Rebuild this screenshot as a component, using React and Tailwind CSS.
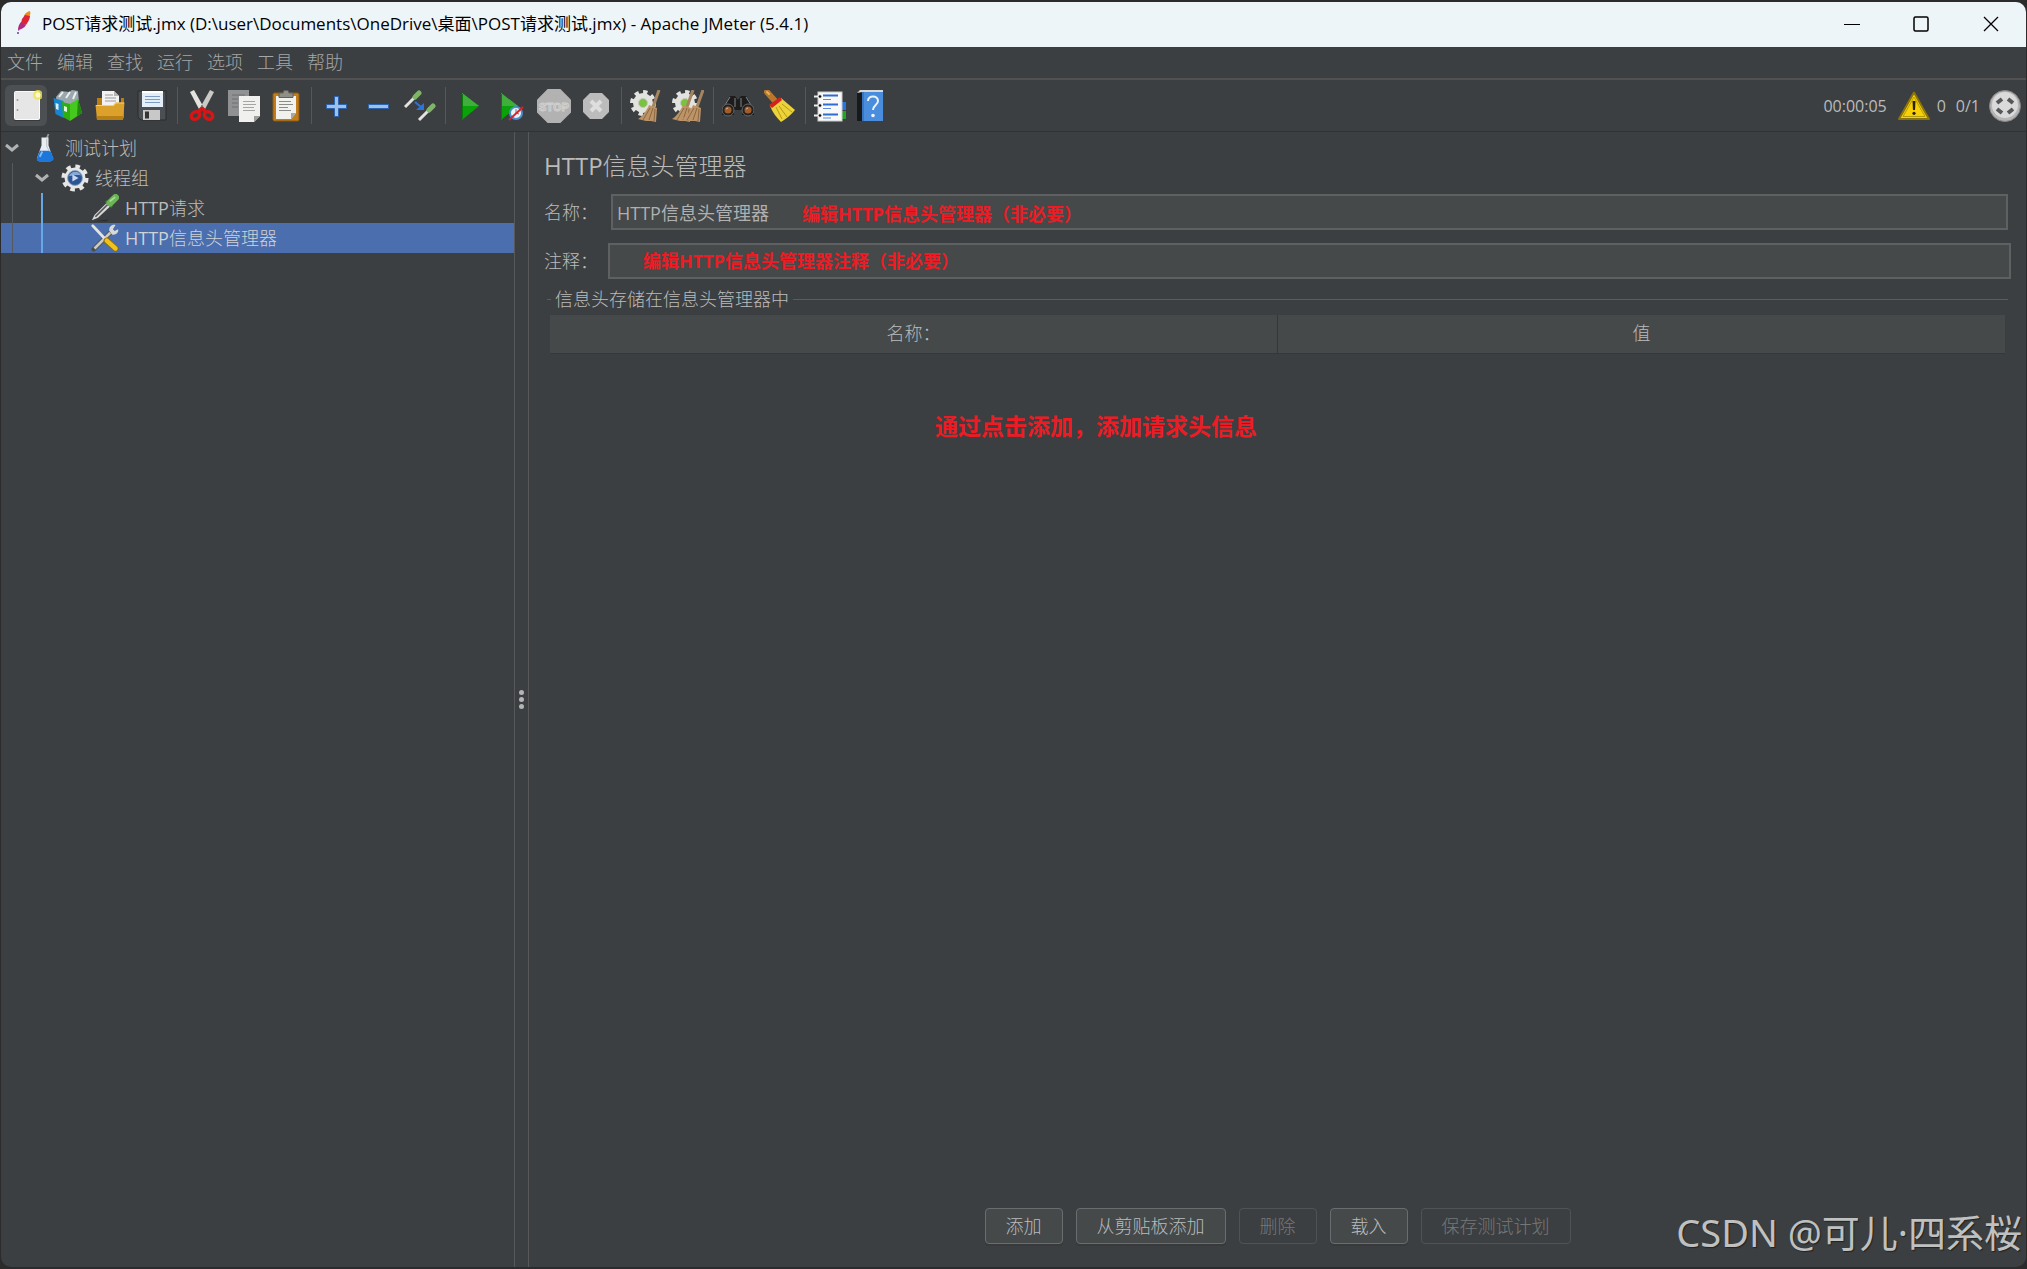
import React, { useState } from 'react'
import { clsx } from 'clsx'

/* ---------------- TOOLBAR ICONS ---------------- */
const Svg = ({ children, className = 'w-8 h-8' }) => (
  <svg viewBox="0 0 32 32" className={clsx('shrink-0', className)} fill="none" aria-hidden="true">
    {children}
  </svg>
)

const NewIcon = () => (
  <Svg>
    <rect x="4.500" y="1.500" width="25" height="28" rx="1" fill="#e6e6e6" stroke="#fafafa" />
    <path d="M4 30.500h26" stroke="#222" strokeOpacity=".5" />
    <circle cx="7.500" cy="10" r="1" fill="#999" />
    <circle cx="7.500" cy="20" r="1" fill="#999" />
    <circle cx="28" cy="5" r="5" fill="#f3e44c" fillOpacity=".8" />
    <circle cx="28" cy="5" r="2.500" fill="#fffbd0" />
  </Svg>
)

const TemplatesIcon = () => (
  <Svg>
    <path d="M4 7l5-6 8 1 3-2 6 1 1 12-22 4z" fill="#9aa7ad" />
    <path d="M7 7l4-5M14 8l4-6M21 9l3-7" stroke="#e9eef0" strokeWidth="2" />
    <path d="M1.500 8l10 3v17l-8-4z" fill="#1687cf" />
    <path d="M3.500 13l3 1v6l-2.500-1z" fill="#d5effc" />
    <path d="M10 12l8 2v17l-7-4z" fill="#2fae14" />
    <path d="M18 14l8-5 4 14-12 8z" fill="#46c81c" />
    <path d="M12 16l3 1v5l-3-1z" fill="#dff7d5" />
    <path d="M26 9l4 14-5 3z" fill="#1e8a0b" />
  </Svg>
)

const OpenIcon = () => (
  <Svg>
    <path d="M3 8h6v5h18V8h3v20H3z" fill="#b97d14" />
    <path d="M8 1h12l5 5v10H8z" fill="#f2f2f2" />
    <path d="M20 1v5h5z" fill="#b5b5b5" />
    <path d="M11 5h8M11 8h11M11 11h11" stroke="#999" />
    <path d="M1.500 15h18l2-2.500h9L29 29.500H3z" fill="#dca12b" />
    <path d="M2 15.500h18l2-2.500h8" stroke="#f6cf70" />
    <path d="M2.500 26h27L29 30H3z" fill="#b87f17" />
  </Svg>
)

const SaveIcon = () => (
  <Svg>
    <path d="M2 1h28v29H5l-3-3z" fill="#4b4e52" stroke="#2a2a2a" />
    <rect x="6" y="1" width="21" height="16" fill="#e4eef8" />
    <path d="M6 2h21" stroke="#fff" strokeWidth="2" />
    <path d="M9 6.500h15M9 9.500h15M9 12.500h15" stroke="#7d9cc4" />
    <rect x="7" y="20" width="17" height="10" fill="#c8c8c8" />
    <rect x="9" y="21.500" width="4" height="7" fill="#333" />
  </Svg>
)

const CutIcon = () => (
  <Svg>
    <path d="M4 2l4-2 9 16-3 5z" fill="#e3e3e0" />
    <path d="M28 2l-4-2-9 16 3 5z" fill="#c9c9c5" />
    <ellipse cx="9.500" cy="25.500" rx="4.500" ry="3.500" transform="rotate(-35 9.500 25.500)" stroke="#d41616" strokeWidth="3.500" />
    <ellipse cx="22.500" cy="25.500" rx="4.500" ry="3.500" transform="rotate(35 22.500 25.500)" stroke="#d41616" strokeWidth="3.500" />
    <path d="M12 22l4-4 4 4" stroke="#d41616" strokeWidth="3.500" />
    <circle cx="16" cy="16" r="1" fill="#777" />
  </Svg>
)

const CopyIcon = () => (
  <Svg>
    <rect x="0" y="0" width="21" height="26" fill="#8f9192" />
    <path d="M4 5h13M4 9h6M4 13h6M4 17h6" stroke="#6c6e70" />
    <path d="M11 6h21v20l-6 6H11z" fill="#f0f0ee" />
    <path d="M15 11.500h12M15 14.500h13M15 17.500h11M15 20.500h12" stroke="#a5a5a5" />
    <path d="M32 26h-6v6z" fill="#9c9e9c" />
  </Svg>
)

const PasteIcon = () => (
  <Svg>
    <rect x="3" y="3" width="26" height="28" rx="1.500" fill="#c17d1b" stroke="#8a5a12" />
    <path d="M6 6h20v17l-5 6H6z" fill="#f1f1ee" />
    <path d="M26 23h-5v6z" fill="#a7a7a2" />
    <path d="M9 11.500h12M9 14.500h14M9 17.500h9M9 20.500h12" stroke="#8b8b8b" />
    <path d="M9 3h4l1-2.500h4L19 3h4v4.500H9z" fill="#8d8f88" stroke="#5f605b" />
  </Svg>
)

const PlusIcon = () => (
  <Svg>
    <path d="M14.500 6.500h4v8h8v4h-8v8h-4v-8h-8v-4h8z" fill="#9dbfe8" stroke="#2d64b0" />
  </Svg>
)

const MinusIcon = () => (
  <Svg>
    <path d="M6.500 14.500h20v4h-20z" fill="#9dbfe8" stroke="#2d64b0" />
  </Svg>
)

const ToggleIcon = () => (
  <Svg>
    <path d="M1 17L11 7" stroke="#e2e2de" strokeWidth="3" />
    <path d="M11 7l4-4" stroke="#7fb567" strokeWidth="5" strokeLinecap="round" />
    <path d="M15 30l10-10" stroke="#e2e2de" strokeWidth="3" />
    <path d="M25 20l4-4" stroke="#7fb567" strokeWidth="5" strokeLinecap="round" />
    <path d="M11 12l6 5" stroke="#2c74dc" strokeWidth="2" />
    <path d="M20 13v7h-8z" fill="#2c74dc" />
  </Svg>
)

const PlayShape = ({ x = 0 }) => (
  <g transform={`translate(${x} 0)`}>
    <path d="M8 3l17 13L8 30z" fill="#09a209" />
    <path d="M8 3l17 13H8z" fill="#3fae3c" />
    <path d="M8.500 4v25" stroke="#067b06" />
  </g>
)

const StartIcon = () => (
  <Svg>
    <PlayShape />
  </Svg>
)

const StartNoPauseIcon = () => (
  <Svg>
    <PlayShape x={-3} />
    <circle cx="20" cy="23" r="6" fill="#e9f2fb" stroke="#4a8fd0" strokeWidth="2" />
    <path d="M20 19v4l3 1" stroke="#777" />
    <path d="M13 30L27 17" stroke="#d42626" strokeWidth="2" />
  </Svg>
)

const StopIcon = () => (
  <Svg className="w-[34px] h-[34px]">
    <path d="M10 0h12l10 10v12L22 32H10L0 22V10z" fill="#b2b2b2" />
    <text x="16" y="20.500" textAnchor="middle" fontSize="11" fill="#b2b2b2" stroke="#d0d0d0" strokeWidth="1" fontFamily="Roboto, sans-serif" className="font-bold">STOP</text>
  </Svg>
)

const ShutdownIcon = () => (
  <Svg>
    <path d="M10 3h12l7 7v12l-7 7H10l-7-7V10z" fill="#bcbcbc" />
    <path d="M11 11l10 10M21 11L11 21" stroke="#dedede" strokeWidth="4" />
  </Svg>
)

const GearBase = () => (
  <>
    <circle cx="13" cy="13" r="11" stroke="#e2e2df" strokeWidth="4" strokeDasharray="4.300 4.300" />
    <circle cx="13" cy="13" r="10" fill="#e2e2df" />
    <circle cx="13" cy="13" r="4.500" fill="#7cc242" stroke="#c3ccbd" />
  </>
)

const Besom = ({ x = 0 }) => (
  <g transform={`translate(${x} 0)`}>
    <path d="M30 0l-6 17" stroke="#a58560" strokeWidth="3" />
    <path d="M20 15l8 3-1 14-5-1-5 0-8-2c4-2 9-9 11-14z" fill="#bd9467" />
    <path d="M21 18l-7 12M24 18l-4 12M26 19l-1 12" stroke="#8b6741" />
  </g>
)

const ClearIcon = () => (
  <Svg>
    <GearBase />
    <Besom x={-1} />
  </Svg>
)

const ClearAllIcon = () => (
  <Svg>
    <GearBase />
    <Besom x={-9} />
    <Besom x={1} />
  </Svg>
)

const SearchIcon = () => (
  <Svg>
    <path d="M8 6h5l3 4 3-4h5l8 13v6H0v-6z" fill="#1c1c1c" />
    <path d="M8 7l-5 8M24 7l5 8M13 8v9M19 8v9" stroke="#858585" />
    <path d="M12 20h8v6h-8z" fill="#3c3f41" />
    <circle cx="6" cy="20" r="6" fill="#222" stroke="#666" />
    <circle cx="26" cy="20" r="6" fill="#222" stroke="#666" />
    <circle cx="6" cy="20" r="3.500" fill="#a35d2b" />
    <circle cx="26" cy="20" r="3.500" fill="#a35d2b" />
    <path d="M4 19l2-1M24 19l2-1" stroke="#e3b28c" />
  </Svg>
)

const BroomIcon = () => (
  <Svg>
    <path d="M3 2l8 9" stroke="#b9772b" strokeWidth="6" strokeLinecap="round" />
    <path d="M3 2l2 2" stroke="#e6b060" strokeWidth="2" strokeLinecap="round" />
    <path d="M6 16L17 8l14 12c-4 5-9 9-14 12-4-4-8-9-11-16z" fill="#ecd33a" />
    <path d="M12 17l6 12M15 16l8 11M18 14l10 8" stroke="#b89614" />
    <path d="M5 15L16 7l2 3L8 18z" fill="#d32020" />
  </Svg>
)

const FunctionHelperIcon = () => (
  <Svg>
    <rect x="28" y="12" width="4" height="8" fill="#2776e0" />
    <rect x="28" y="21" width="4" height="8" fill="#24a324" />
    <rect x="4" y="2" width="24" height="29" fill="#f8f8f8" stroke="#ccc" />
    <path d="M9 5.500h15M9 14.500h15M9 24.500h15" stroke="#2f6cd0" strokeWidth="2" />
    <path d="M9 9.500h8M9 18.500h8M9 28h8" stroke="#5c8ddc" />
    <g fill="#111" stroke="#eee">
      <path d="M0 6.500h8M0 15.500h8M0 25.500h8" strokeWidth="2" />
      <circle cx="6" cy="6.500" r="1.800" />
      <circle cx="6" cy="15.500" r="1.800" />
      <circle cx="6" cy="25.500" r="1.800" />
    </g>
  </Svg>
)

const HelpIcon = () => (
  <Svg>
    <path d="M1 3l3-3h23v2H5z" fill="#d9d9d9" />
    <path d="M1 3h6v28H1z" fill="#18191b" />
    <path d="M6 2h21v29H6z" fill="#4b8ddd" />
    <path d="M7 2v29" stroke="#2860a8" />
    <path d="M12 11c0-6 10-6 10 0 0 4-5 4-5 9" stroke="#eaf3fd" strokeWidth="2" />
    <circle cx="17" cy="25.500" r="1.800" fill="#eaf3fd" />
  </Svg>
)

const WarningIcon = () => (
  <Svg className="w-[34px] h-8">
    <path d="M16 2.500L31 29H1z" fill="#f7d008" stroke="#8a7408" strokeWidth="2" strokeLinejoin="round" />
    <path d="M16 7L27 26.500H5z" stroke="#b59a08" strokeWidth="1" />
    <path d="M14.500 11h3l-.5 9h-2z" fill="#2b2400" />
    <circle cx="16" cy="23.300" r="1.600" fill="#2b2400" />
  </Svg>
)

const ThreadsIcon = () => (
  <Svg>
    <circle cx="16" cy="16" r="15.500" fill="#b5b5b5" stroke="#858585" />
    <circle cx="16" cy="15" r="13" fill="#dadada" />
    <path d="M8 13l5-4M19 9l5 4M8 19l5 4M24 19l-5 4" stroke="#55585a" strokeWidth="4" />
  </Svg>
)

/* ---------------- TREE ICONS ---------------- */
const FlaskIcon = () => (
  <Svg className="w-7 h-7">
    <path d="M20 0l-2 5" stroke="#999" strokeWidth="2" />
    <path d="M12 4h8v9l5 14c0 3-2 4-3 4H10c-2 0-4-2-3-4l5-14z" fill="#e8edf1" />
    <path d="M10 19h12l4 9c0 2-2 3-4 3H10c-3 0-4-2-3-4z" fill="#1d76da" />
    <path d="M13 20l-3 6" stroke="#84bbf3" strokeWidth="2" />
    <path d="M18 5v9l3 6" stroke="#b0b7bd" />
  </Svg>
)

const ThreadGroupIcon = () => (
  <Svg className="w-7 h-7">
    <circle cx="16" cy="16" r="13" stroke="#e6e6e6" strokeWidth="5" strokeDasharray="5.100 5.110" />
    <circle cx="16" cy="16" r="12" fill="#e6e6e6" />
    <circle cx="16" cy="16" r="8.500" fill="#2d5594" stroke="#8fa3c2" />
    <path d="M9 14c2-6 11-7 14-1-5-1-9 0-14 1z" fill="#86a9d8" />
    <path d="M13 12l7 4-7 4z" fill="#c9d7ee" />
  </Svg>
)

const PipetteIcon = () => (
  <Svg className="w-7 h-7">
    <path d="M3 31h14l4-2z" fill="#292b2d" />
    <path d="M1 30l3-6L19 9l4 4L8 27z" fill="#d9dad8" />
    <path d="M5 26L19 12" stroke="#555" strokeWidth="2" />
    <path d="M17 8l7 7" stroke="#3a7f2b" strokeWidth="3" />
    <path d="M22 10l6-6" stroke="#6db457" strokeWidth="8" strokeLinecap="round" />
    <path d="M22 8l5-4" stroke="#a4d894" strokeWidth="2" strokeLinecap="round" />
  </Svg>
)

const ToolsIcon = () => (
  <Svg className="w-7 h-7">
    <path d="M3 29L22 10" stroke="#4d4e48" strokeWidth="5" strokeLinecap="round" />
    <path d="M4 28L22 10" stroke="#c9cac5" strokeWidth="3" />
    <path d="M28 1c-4-1-8 2-7 7l3 4c4 1 8-2 7-6l-4 2-2-2z" fill="#d9dad6" />
    <path d="M2 2l15 16" stroke="#e4e4e1" strokeWidth="3" strokeLinecap="round" />
    <path d="M18 19l10 9" stroke="#8f6c08" strokeWidth="7" strokeLinecap="round" />
    <path d="M18 19l10 9" stroke="#f1c21d" strokeWidth="5" strokeLinecap="round" />
  </Svg>
)

const Chevron = () => (
  <svg viewBox="0 0 14 10" className="w-[14px] h-[10px]" fill="none" aria-hidden="true">
    <path d="M1 2l6 5 6-5" stroke="#afb1b3" strokeWidth="3" />
  </svg>
)

/* ---------------- DATA ---------------- */
const menus = ['文件', '编辑', '查找', '运行', '选项', '工具', '帮助']

const toolbar = [
  [['新建', NewIcon], ['模板', TemplatesIcon], ['打开', OpenIcon], ['保存', SaveIcon]],
  [['剪切', CutIcon], ['复制', CopyIcon], ['粘贴', PasteIcon]],
  [['展开', PlusIcon], ['折叠', MinusIcon], ['切换', ToggleIcon]],
  [['启动', StartIcon], ['不停顿启动', StartNoPauseIcon], ['停止', StopIcon], ['关闭', ShutdownIcon]],
  [['清除', ClearIcon], ['清除全部', ClearAllIcon]],
  [['搜索', SearchIcon], ['重置搜索', BroomIcon]],
  [['函数助手', FunctionHelperIcon], ['帮助', HelpIcon]],
]

const tree = [
  { label: '测试计划', icon: FlaskIcon, indent: 'pl-1', open: true },
  { label: '线程组', icon: ThreadGroupIcon, indent: 'pl-[34px]', open: true },
  { prefix: 'HTTP', label: '请求', icon: PipetteIcon, indent: 'pl-16' },
  { prefix: 'HTTP', label: '信息头管理器', icon: ToolsIcon, indent: 'pl-16' },
]

const actions = [
  { label: '添加' },
  { label: '从剪贴板添加' },
  { label: '删除', disabled: true },
  { label: '载入' },
  { label: '保存测试计划', disabled: true },
]

/* ---------------- PARTS ---------------- */
function TitleBar() {
  return (
    <header className="h-[45px] shrink-0 flex items-center bg-[#eef5f8] text-black">
      <svg viewBox="0 0 16 24" className="w-4 h-6 ml-[15px] mb-1" fill="none" aria-hidden="true">
        <path d="M8 5c1-3 3-4 6-5 1 3 0 5-2 7z" fill="#f08a1d" />
        <path d="M6 8l3-4 5 1c0 3-2 6-4 9l-5-2z" fill="#dc2437" />
        <path d="M5 11l5 3c-2 3-4 4-8 5 0-3 1-6 3-8z" fill="#b02a7d" />
        <path d="M2 19l2-3-1 4z" fill="#7b3a9a" />
        <circle cx="2" cy="22" r="1" fill="#6d3a9c" />
      </svg>
      <h1 className="ml-[10px] mb-[2px] flex-1 text-[17px] font-normal whitespace-nowrap">
        POST请求测试.jmx (D:\user\Documents\OneDrive\桌面\POST请求测试.jmx) - Apache JMeter (5.4.1)
      </h1>
      <div className="flex h-[43px] self-start">
        <button aria-label="最小化" className="w-[69px] flex items-center justify-center">
          <svg viewBox="0 0 16 16" className="w-4 h-4" stroke="#000" fill="none"><path d="M0 8.500h16" /></svg>
        </button>
        <button aria-label="最大化" className="w-[69px] flex items-center justify-center">
          <svg viewBox="0 0 16 16" className="w-4 h-4" stroke="#000" fill="none"><rect x="1" y="1" width="14" height="14" rx="1.500" strokeWidth="1.500" /></svg>
        </button>
        <button aria-label="关闭" className="w-[71px] flex items-center justify-center">
          <svg viewBox="0 0 16 16" className="w-4 h-4" stroke="#000" fill="none"><path d="M1 1l14 14M15 1L1 15" strokeWidth="1.300" /></svg>
        </button>
      </div>
    </header>
  )
}

function Toolbar() {
  return (
    <div className="h-[52px] shrink-0 flex items-center pl-1 pr-[5px] border-b border-[#323232]">
      {toolbar.map((group, g) => (
        <React.Fragment key={g}>
          {g > 0 && <span className="w-2 h-[37px] flex justify-center"><i className="w-px bg-[#555758]" /></span>}
          {group.map(([name, Icon], i) => (
            <button
              key={name}
              aria-label={name}
              className={clsx(
                'w-[42px] h-[41px] flex items-center justify-center rounded-md',
                g === 0 && i === 0 && 'bg-[#4c5052]'
              )}
            >
              <Icon />
            </button>
          ))}
        </React.Fragment>
      ))}
      <div className="ml-auto flex items-center text-[16px] font-normal">
        <span className="mr-[10px]">00:00:05</span>
        <WarningIcon />
        <span className="ml-[6px] mr-[10px]">0</span>
        <span className="mr-[9px]">0/1</span>
        <ThreadsIcon />
      </div>
    </div>
  )
}

function Tree() {
  const [selected, setSelected] = useState(3)

  return (
    <nav className="relative w-[513px] shrink-0 pt-px">
      {tree.map(({ prefix, label, icon: Icon, indent, open }, i) => (
        <button
          key={label}
          onClick={() => setSelected(i)}
          className={clsx(
            'w-full h-[30px] flex items-center text-left',
            indent,
            selected === i && 'bg-[#4b6eaf] text-[#d0d2d4]'
          )}
        >
          <span className="w-[26px] flex">{open && <Chevron />}</span>
          <Icon />
          <span className="ml-[6px]">
            {prefix && <b className="font-normal">{prefix}</b>}
            {label}
          </span>
        </button>
      ))}
      {/* guide lines run over the rows */}
      <i className="absolute left-[11px] top-[31px] w-px h-[90px] bg-[#56595b]" />
      <i className="absolute left-10 top-[61px] w-[2px] h-[60px] bg-[#64a8e6]" />
    </nav>
  )
}

function HeaderPanel() {
  const [name, setName] = useState('HTTP信息头管理器')
  const [comment, setComment] = useState('')

  return (
    <main className="flex-1 min-w-0 flex flex-col pl-[15px] pr-[15px]">
      <h2 className="mt-4 h-9 leading-9 text-[24px]">
        <b className="font-normal">HTTP</b>信息头管理器
      </h2>

      <div className="relative mt-[10px] flex items-center pr-[3px]">
        <label htmlFor="name" className="w-[67px]">名称：</label>
        <input
          id="name"
          value={name}
          onChange={e => setName(e.target.value)}
          className="flex-1 h-9 px-1 bg-[#45494a] border-2 border-[#5e6061] outline-none font-normal text-[#b0b0b0]"
        />
        <span className="absolute left-[258px] top-2 leading-6 font-bold text-[#ed1c24] pointer-events-none">
          编辑HTTP信息头管理器（非必要）
        </span>
      </div>

      <div className="relative mt-[13px] flex items-center">
        <label htmlFor="comment" className="w-16">注释：</label>
        <input
          id="comment"
          value={comment}
          onChange={e => setComment(e.target.value)}
          className="flex-1 h-9 px-1 bg-[#45494a] border-2 border-[#5e6061] outline-none font-normal text-[#b0b0b0]"
        />
        <span className="absolute left-[99px] top-[6px] leading-6 font-bold text-[#ed1c24] pointer-events-none">
          编辑HTTP信息头管理器注释（非必要）
        </span>
      </div>

      <section className="mt-[7px] pr-[3px] flex-1 flex flex-col">
        <div className="flex items-center h-[26px] pl-[3px]">
          <i className="w-1 h-px bg-[#5a5d5f]" />
          <h3 className="mx-1">信息头存储在信息头管理器中</h3>
          <i className="flex-1 h-px bg-[#5a5d5f]" />
        </div>
        <div className="mt-[3px] pl-[6px] pr-[3px]">
          <table className="w-full table-fixed border-collapse">
            <thead>
              <tr className="h-[38px] bg-[#45494a] border-b border-[#35383a]">
                <th className="font-light border-r border-[#35383a]">名称：</th>
                <th className="font-light">值</th>
              </tr>
            </thead>
          </table>
        </div>
        <p className="mt-[54px] ml-[391px] leading-9 text-[23px] font-bold text-[#ed1c24]">
          通过点击添加，添加请求头信息
        </p>
      </section>

      <div className="mb-[23px] flex justify-center gap-[13px]">
        {actions.map(({ label, disabled }) => (
          <button
            key={label}
            disabled={disabled}
            className={clsx(
              'h-9 px-5 border rounded-[4px]',
              disabled
                ? 'border-[#505355] text-[#777777]'
                : 'bg-[#45494a] border-[#686e70] shadow-[0_2px_0_#37393b]'
            )}
          >
            {label}
          </button>
        ))}
      </div>
    </main>
  )
}

/* ---------------- UI ---------------- */
function App() {
  return (
    <div className="h-screen bg-[#2b2b2b] px-px py-[2px]">
      <div className="relative h-full flex flex-col rounded-[10px] overflow-hidden bg-[#3c3f41] text-[18px] font-light text-[#bbbbbb] [font-family:'Open_Sans','Noto_Sans_CJK_SC',sans-serif]">
        <TitleBar />

        <nav className="h-[33px] shrink-0 flex items-center gap-[14px] pl-[6px] border-b-2 border-[#515151]">
          {menus.map(m => <button key={m} className="text-[#a4a6a7]">{m}</button>)}
        </nav>

        <Toolbar />

        <div className="flex-1 min-h-0 flex">
          <Tree />
          <div className="w-[15px] shrink-0 flex flex-col items-center justify-center gap-[2px] border-x border-[#56585a]">
            <i className="w-[5px] h-[5px] rounded-full bg-[#b4b4b4]" />
            <i className="w-[5px] h-[5px] rounded-full bg-[#b4b4b4]" />
            <i className="w-[5px] h-[5px] rounded-full bg-[#b4b4b4]" />
          </div>
          <HeaderPanel />
        </div>

        <p className="absolute right-1 bottom-[9px] text-[38px] leading-[52px] font-normal text-[#bfc0c0] [font-family:'Noto_Sans','Noto_Sans_CJK_JP',sans-serif] [text-shadow:1px_1px_1px_#222] pointer-events-none">
          CSDN @可儿·四系桜
        </p>
      </div>
    </div>
  )
}

export default App
